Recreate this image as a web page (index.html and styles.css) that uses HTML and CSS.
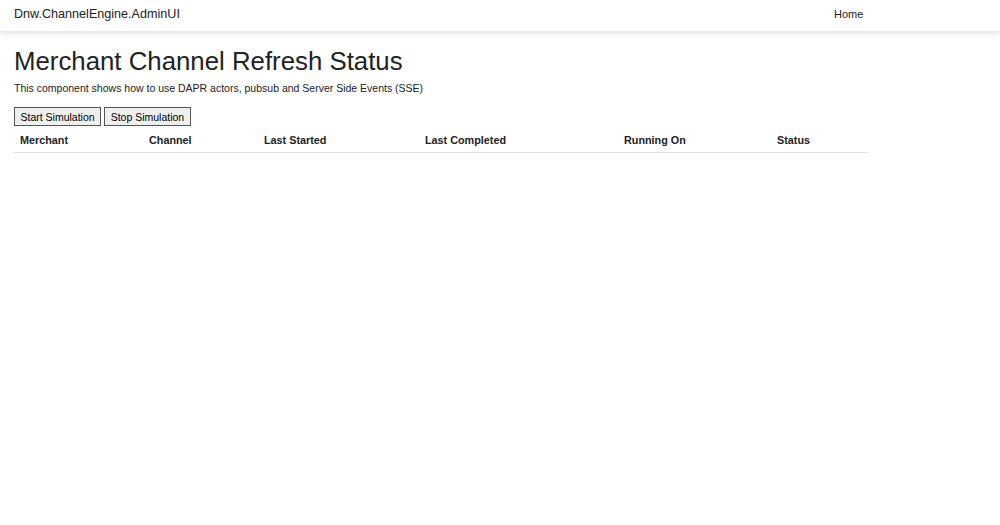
FILE: index.html
```html
<!DOCTYPE html>
<html>
<head>
<meta charset="utf-8">
<link rel="stylesheet" href="styles.css">
</head>
<body>
<header class="navbar">
  <a class="brand" href="#">Dnw.ChannelEngine.AdminUI</a>
  <nav class="nav"><a class="nav-link" href="#">Home</a></nav>
</header>
<main class="content">
  <h1 class="title">Merchant Channel Refresh Status</h1>
  <p class="lead">This component shows how to use DAPR actors, pubsub and Server Side Events (SSE)</p>
  <div class="actions">
    <button class="btn">Start Simulation</button>
    <button class="btn">Stop Simulation</button>
  </div>
  <table class="table">
    <thead>
      <tr>
        <th class="c1">Merchant</th>
        <th class="c2">Channel</th>
        <th class="c3">Last Started</th>
        <th class="c4">Last Completed</th>
        <th class="c5">Running On</th>
        <th class="c6">Status</th>
      </tr>
    </thead>
    <tbody></tbody>
  </table>
</main>
</body>
</html>
```

FILE: styles.css
```css
* { box-sizing: border-box; }
html, body { margin: 0; padding: 0; background: #fff; }
body {
  font-family: "Liberation Sans", Arial, sans-serif;
  color: #212529;
  font-size: 11px;
}
a { text-decoration: none; color: #212529; }
.navbar {
  height: 32px;
  display: flex;
  align-items: center;
  justify-content: space-between;
  padding: 0 14px;
  box-shadow: 0 1px 6px rgba(0,0,0,0.12);
  border-bottom: 1px solid #ececec;
}
.brand { font-size: 12.6px; color: #222; margin-top: -3px; }
.nav { width: 152px; margin-top: -3px; }
.nav-link { font-size: 11px; color: #222; }
.content { padding: 0 14px; }
.title {
  margin: 13px 0 0;
  font-size: 25.8px;
  font-weight: 400;
  line-height: 32px;
  color: #222;
}
.lead { margin: 4px 0 0; font-size: 10.5px; line-height: 14px; color: #222; }
.actions { margin-top: 12px; display: flex; gap: 3px; }
.btn {
  font-family: "Liberation Sans", Arial, sans-serif;
  font-size: 10.5px;
  height: 19px;
  padding: 0 5.5px;
  background: #efefef;
  border: 1px solid #555;
  color: #000;
  border-radius: 0;
  margin: 0;
}
.table {
  width: 854px;
  border-collapse: collapse;
  margin-top: 2px;
}
.table th {
  text-align: left;
  font-size: 10.8px;
  font-weight: 700;
  padding: 6px 6px 5px;
  line-height: 13px;
  border-bottom: 1px solid #dee2e6;
  color: #222;
}
.c1 { width: 129px; }
.c2 { width: 115px; }
.c3 { width: 161px; }
.c4 { width: 199px; }
.c5 { width: 153px; }
.c6 { width: 97px; }
```
